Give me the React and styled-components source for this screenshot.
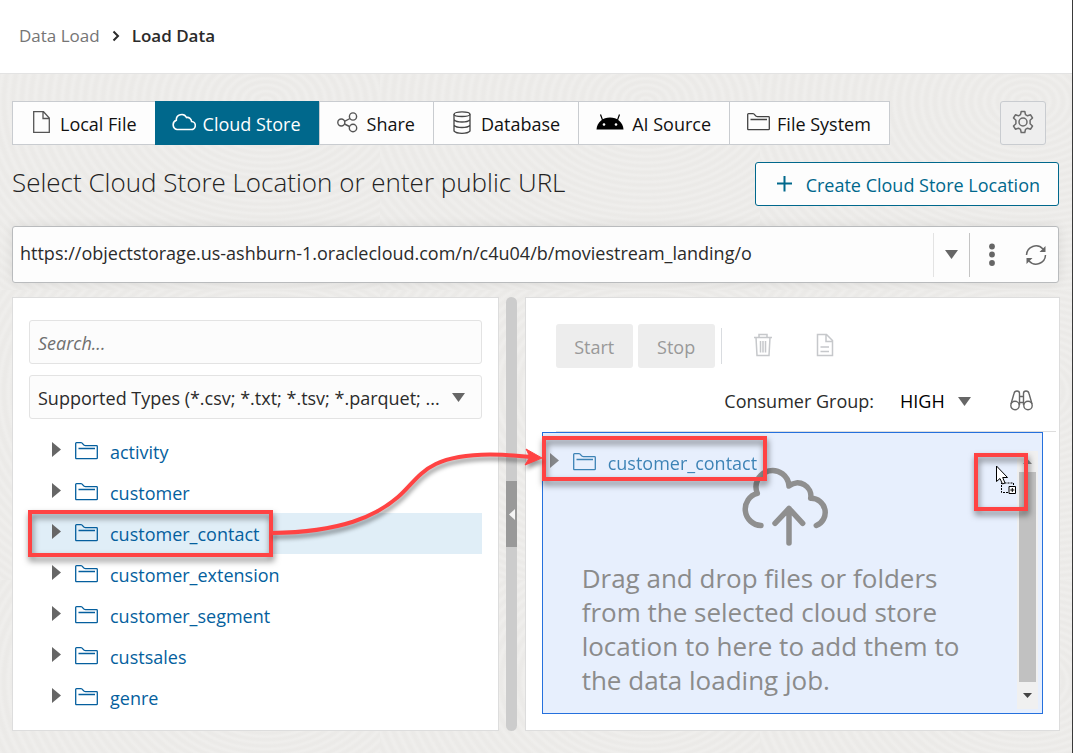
import React from "react";
import styled, { createGlobalStyle } from "styled-components";

const GlobalStyle = createGlobalStyle`
  *, *::before, *::after { box-sizing: border-box; }
  body {
    margin: 0;
    background: #efeeec;
    color: #2b2b2b;
    font-family: "Open Sans", "Noto Sans", sans-serif;
    font-size: 18px;
    line-height: 24px;
  }
  button, input, select { font: inherit; color: inherit; margin: 0; }
  h1, ul, p { margin: 0; padding: 0; }
`;

const Page = styled.div`
  min-height: 100vh;
  border-right: 1px solid #3a3a3a;
  background-color: #efeeec;
  background-image: repeating-radial-gradient(
    ellipse at 70% 35%,
    rgba(90, 80, 70, 0.025) 0 2px,
    transparent 5px 6px,
    rgba(90, 80, 70, 0.025) 9px
  );
  background-size: 380px 290px;
`;

const Header = styled.header`
  height: 74px;
  padding: 0 0 2px 19px;
  display: flex;
  align-items: center;
  background: #fff;
  border-bottom: 1px solid #e3e3e3;
`;

const Breadcrumb = styled.nav`
  display: flex;
  align-items: center;
  gap: 12px;
  font-size: 17px;
`;

const CrumbLink = styled.a`
  color: #757575;
  text-decoration: none;
`;

const CrumbCurrent = styled.span`
  font-weight: 600;
  color: #2b2b2b;
`;

const Main = styled.main`
  padding: 27px 12px 22px;
`;

const TopBar = styled.div`
  display: flex;
  justify-content: space-between;
  padding-right: 14px;
`;

const Tabs = styled.div`
  display: flex;
  border: 1px solid #c9ccd0;
`;

const Tab = styled.button`
  height: 42px;
  display: flex;
  align-items: center;
  gap: 7px;
  padding: 2px 18px 0 16px;
  border: 0;
  border-left: ${(p) => (p.$first ? "0" : "1px solid #c9ccd0")};
  background: #fdfdfd;
  color: #111;
  white-space: nowrap;
  ${(p) =>
    p.$active &&
    `
    background: #00688c;
    color: #fff;
    margin: -1px 0;
    height: 44px;
    border-color: #00688c;
  `}
`;

const TabIcon = styled.span`
  width: ${(p) => (p.$wide ? 30 : 24)}px;
  height: 28px;
  display: flex;
  justify-content: center;
  align-items: center;
  padding-bottom: 4px;
`;

const SettingsButton = styled.button`
  width: 46px;
  height: 44px;
  display: grid;
  place-items: center;
  padding: 0 0 2px;
  border: 1px solid #c9ccd0;
  border-radius: 3px;
  background: #eeeeee;
`;

const TitleBar = styled.div`
  display: flex;
  justify-content: space-between;
  align-items: flex-start;
  margin-top: 17px;
  padding-right: 1px;
`;

const Title = styled.h1`
  font-size: 26px;
  line-height: 40px;
  font-weight: 300;
  color: #222;
`;

const CreateButton = styled.button`
  height: 44px;
  display: flex;
  align-items: center;
  gap: 12px;
  padding: 1px 18px 0 20px;
  border: 1px solid #00688c;
  border-radius: 3px;
  background: #fdfdfd;
  color: #00688c;
`;

const UrlBar = styled.div`
  display: flex;
  align-items: center;
  height: 57px;
  margin: 20px 1px 0 0;
  border: 1px solid #b9bbbd;
  border-radius: 3px;
  background: #fdfdfd;
  box-shadow: 0 0 12px rgba(0, 0, 0, 0.08);
`;

const UrlInput = styled.input`
  flex: 1;
  min-width: 0;
  height: 100%;
  padding: 0 7px 4px;
  border: 0;
  outline: 0;
  background: transparent;
`;

const UrlAction = styled.button`
  width: ${(p) => p.$width}px;
  height: 44px;
  display: grid;
  place-items: center;
  padding: 0;
  border: 0;
  border-left: ${(p) => (p.$divider ? `1px solid ${p.$divider}` : "0")};
  background: transparent;
`;

const Workspace = styled.div`
  position: relative;
  display: grid;
  grid-template-columns: 10fr 26px 11fr;
  margin-top: 14px;
`;

const Panel = styled.section`
  min-width: 0;
  border: 1px solid #dddddd;
  background: #fff;
`;

const SourcePanel = styled(Panel)`
  padding: 22px 16px 11px;
`;

const field = `
  width: 100%;
  height: 44px;
  border: 1px solid #e3e3e3;
  border-radius: 3px;
  background: #fcfcfc;
`;

const SearchInput = styled.input`
  ${field}
  display: block;
  padding: 2px 8px 0;
  outline: 0;
  &::placeholder { color: #6f6f6f; font-style: italic; opacity: 1; }
`;

const SelectField = styled.div`
  ${field}
  display: flex;
  align-items: center;
  margin-top: 11px;
  padding-right: 16px;
`;

const PlainSelect = styled.select`
  flex: 1;
  min-width: 0;
  height: 42px;
  padding: 2px 8px 0;
  border: 0;
  outline: 0;
  appearance: none;
  background: transparent;
`;

const Tree = styled.ul`
  list-style: none;
  margin-top: 12px;
`;

const TreeItem = styled.li`
  position: relative;
  height: 41px;
  display: flex;
  background: ${(p) => (p.$selected ? "#e0eef7" : "transparent")};
`;

const TreeButton = styled.button`
  display: flex;
  align-items: center;
  padding: 0 8px 0 23px;
  border: 0;
  background: transparent;
  color: #055f9e;
  white-space: nowrap;
`;

const TreeIcon = styled.span`
  display: flex;
  height: 24px;
  padding-top: 2px;
  margin-left: ${(p) => (p.$gap ? 14 : 0)}px;
  margin-right: ${(p) => (p.$gap ? 12 : 0)}px;
`;

const Callout = styled.span`
  position: absolute;
  top: ${(p) => p.$top};
  left: ${(p) => p.$left};
  right: ${(p) => p.$right || "auto"};
  width: ${(p) => p.$width};
  height: ${(p) => p.$height};
  border: 4px solid #ff4343;
  filter: drop-shadow(1px 4px 3px rgba(0, 0, 0, 0.5));
  pointer-events: none;
`;

const Splitter = styled.div`
  justify-self: center;
  width: 11px;
  display: flex;
  flex-direction: column;
  justify-content: center;
  border-radius: 6px;
  background: #cccccc;
`;

const SplitterHandle = styled.button`
  width: 11px;
  height: 66px;
  display: grid;
  place-items: center;
  padding: 0;
  border: 0;
  background: #999999;
`;

const JobPanel = styled(Panel)`
  padding: 26px 16px 16px;
`;

const JobToolbar = styled.div`
  display: flex;
  align-items: center;
  gap: 5px;
  padding-left: 14px;
`;

const JobButton = styled.button`
  min-width: 77px;
  height: 44px;
  padding: 2px 0 0;
  border: 0;
  border-radius: 3px;
  background: #ededed;
  color: #999999;
`;

const ToolbarDivider = styled.span`
  width: 1px;
  height: 36px;
  margin: 0 15px 0 1px;
  background: #d9dce0;
`;

const IconButton = styled.button`
  width: ${(p) => p.$width || 42}px;
  height: 42px;
  display: grid;
  place-items: center;
  padding: 0 0 2px;
  border: 0;
  background: transparent;
`;

const GroupBar = styled.div`
  display: flex;
  align-items: center;
  justify-content: flex-end;
  height: 50px;
  margin-top: 8px;
  padding-right: 1px;
`;

const GroupSelect = styled.span`
  display: flex;
  align-items: center;
  width: 71px;
  margin: 0 29px 0 26px;
`;

const HighSelect = styled.select`
  flex: 1;
  min-width: 0;
  padding: 0;
  border: 0;
  outline: 0;
  appearance: none;
  background: transparent;
  color: #000;
`;

const GroupRule = styled.div`
  height: 1px;
  margin: 5px -13px 0 14px;
  background: #dddddd;
`;

const DropZone = styled.div`
  position: relative;
  min-height: 282px;
  border: 1px solid #2570dd;
  background: #e7effd;
`;

const DropMessage = styled.div`
  display: flex;
  flex-direction: column;
  padding: 32px 66px 16px 39px;
`;

const DropIcon = styled.span`
  align-self: center;
  display: flex;
  margin: 0 0 12px 14px;
`;

const DropText = styled.p`
  color: #8b8b8b;
  font-size: 26px;
  line-height: 34px;
`;

const DragGhost = styled.div`
  position: absolute;
  top: 9px;
  left: 0;
  height: 41px;
  display: flex;
  align-items: center;
  padding-left: 7px;
  color: #055f9e;
  opacity: 0.75;
`;

const Scrollbar = styled.div`
  position: absolute;
  top: 18px;
  right: 4px;
  bottom: 4px;
  width: 21px;
  display: flex;
  flex-direction: column;
  align-items: center;
  background: #f0f0f0;
`;

const ScrollArrow = styled.span`
  height: ${(p) => p.$size}px;
  display: grid;
  place-items: center;
`;

const ScrollThumb = styled.span`
  flex: 1;
  width: 17px;
  background: #c1c1c1;
`;

const DragCursor = styled.span`
  position: absolute;
  top: 31px;
  right: 25px;
  display: flex;
`;

const ArrowLayer = styled.svg`
  position: absolute;
  top: 0;
  left: 0;
  overflow: visible;
  pointer-events: none;
  filter: drop-shadow(1px 4px 2px rgba(0, 0, 0, 0.4));
`;

const Caret = ({ color = "#666" }) => (
  <svg width="13" height="9" viewBox="0 0 13 9" aria-hidden="true">
    <path d="M0 0h13L6.5 9z" fill={color} />
  </svg>
);

const Chevron = () => (
  <svg width="8" height="12" viewBox="0 0 8 12" fill="none" aria-hidden="true">
    <path d="M1.500 1.500 6 6l-4.500 4.500" stroke="#2b2b2b" strokeWidth="2" />
  </svg>
);

const Twisty = () => (
  <svg width="9" height="15" viewBox="0 0 9 15" aria-hidden="true">
    <path d="M0 0v15l9-7.500z" fill="#666" />
  </svg>
);

const Folder = ({ color = "currentColor" }) => (
  <svg width="23" height="18" viewBox="0 0 23 18" fill="none" stroke={color} strokeWidth="1.300" aria-hidden="true">
    <path d="M.7 16V1.500Q.7.700 1.500.700H6Q7 .7 8 2.200T10.500 3.700H21.500Q22.300 3.700 22.300 4.500V16Q22.300 16.700 21.500 16.700H1.500Q.7 16.700.7 16ZM3.500 6.500H20" />
  </svg>
);

const icons = {
  file: (
    <svg width="17" height="22" viewBox="0 0 17 22" fill="none" stroke="#555" strokeWidth="1.300">
      <path d="M.7.700H10.500L16.300 7V21.300H.7ZM10 .7V7.500H16" />
    </svg>
  ),
  cloud: (
    <svg width="24" height="20" viewBox="0 0 24 20" fill="none" stroke="#fff" strokeWidth="1.600">
      <path d="M5 17.500H19A4 4 0 0 0 19.600 9.500A4.300 4.300 0 0 0 14.500 5.500A5.400 5.400 0 0 0 4.300 8.300A4.800 4.800 0 0 0 5 17.500Z" />
    </svg>
  ),
  share: (
    <svg width="21" height="21" viewBox="0 0 21 21" fill="none" stroke="#555" strokeWidth="1.400">
      <circle cx="4.300" cy="10.500" r="3.500" />
      <circle cx="16" cy="4.500" r="3.600" />
      <circle cx="16" cy="16" r="3.700" />
      <path d="M7.500 9.300 13 6.500M7.500 12 12.500 14.500" />
    </svg>
  ),
  database: (
    <svg width="18" height="23" viewBox="0 0 18 23" fill="none" stroke="#444" strokeWidth="1.300">
      <ellipse cx="9" cy="3.200" rx="8" ry="2.300" />
      <path d="M1 3.200V20Q3 22.300 9 22.300T17 20V3.200M1 8.700Q3 11 9 11T17 8.700M1 14.200Q3 16.500 9 16.500T17 14.200" />
    </svg>
  ),
  ai: (
    <svg width="28" height="18" viewBox="0 0 28 18">
      <path d="M.5 16.500C1 9 7 4.500 14 4.500S27 9 27.500 16.500Z" fill="#000" />
      <path d="M6.500 7 4.500 1.500M21.500 7 23.500 1.500" stroke="#000" strokeWidth="1.200" />
      <circle cx="8" cy="11.500" r="1.300" fill="#fff" />
      <circle cx="20" cy="11.500" r="1.300" fill="#fff" />
    </svg>
  ),
  folder: <Folder color="#444" />,
};

const Gear = () => (
  <svg width="24" height="24" viewBox="0 0 24 24" fill="none" stroke="#6b6b6b" strokeWidth="1.500" strokeLinejoin="round">
    <circle cx="12" cy="12" r="4" />
    <path d="M10.200 1.500h3.600l.7 3.200 2 1.100 3.100-1 1.900 3.200-2.400 2.200v3.600l2.400 2.200-1.900 3.200-3.100-1-2 1.100-.7 3.200h-3.600l-.7-3.200-2-1.100-3.100 1L2.500 16l2.400-2.200v-3.600L2.500 8l1.900-3.200 3.100 1 2-1.100z" />
  </svg>
);

const Plus = () => (
  <svg width="18" height="20" viewBox="0 0 18 20" aria-hidden="true">
    <path d="M8.500 1V16.500M1 8.500H16" stroke="#00688c" strokeWidth="2" />
  </svg>
);

const Dots = () => (
  <svg width="6" height="24" viewBox="0 0 6 24" fill="#666">
    <circle cx="3" cy="3.500" r="2.900" />
    <circle cx="3" cy="11.500" r="2.900" />
    <circle cx="3" cy="20" r="2.900" />
  </svg>
);

const Refresh = () => (
  <svg width="22" height="22" viewBox="0 0 22 22" fill="none" stroke="#666" strokeWidth="1.500">
    <path d="M1.500 11A9.500 9.500 0 0 1 18 5M20.500 11A9.500 9.500 0 0 1 4 17" />
    <path d="M20.500 2V8H14.500ZM1.500 20V14H7.500Z" fill="#666" stroke="none" />
  </svg>
);

const Trash = () => (
  <svg width="20" height="24" viewBox="0 0 20 24" fill="none" stroke="#c6c8cb" strokeWidth="1.500">
    <path d="M1 4.500H19M6 4.500V1.500H14V4.500M3 4.500 4 22.500H16L17 4.500M7.500 8V19.500M10 8V19.500M12.500 8V19.500" />
  </svg>
);

const Log = () => (
  <svg width="18" height="24" viewBox="0 0 18 24" fill="none" stroke="#c6c8cb" strokeWidth="1.500">
    <path d="M1.500 1.500H10.500L16.500 7.500V22.500H1.500ZM10 1.500V8.500H16.500M4.500 14H13M4.500 18.500H13" />
  </svg>
);

const Binoculars = () => (
  <svg width="23" height="21" viewBox="0 0 23 21" fill="none" stroke="#666" strokeWidth="1.400">
    <circle cx="5" cy="15.500" r="4.200" />
    <circle cx="18" cy="15.500" r="4.200" />
    <path d="M1 14 4 3.500Q4.500 1 7 1T9.500 3.500V15M22 14 19 3.500Q18.500 1 16 1T13.500 3.500V15M9.500 6.500H13.500M9.500 12.500H13.500" />
  </svg>
);

const CloudUpload = () => (
  <svg width="92" height="84" viewBox="0 0 92 84" fill="none" stroke="#8f8f8f" strokeWidth="5.500" strokeLinecap="round" strokeLinejoin="round" aria-hidden="true">
    <path d="M21 60.500A16.400 16.400 0 0 1 17.300 28.300A16.500 16.500 0 1 1 49 21A13.300 13.300 0 0 1 70.700 33.300A14.100 14.100 0 0 1 76.300 60.500" />
    <path d="M49 78V43.500M35 58.300 49 43.500 62.700 58.300" />
  </svg>
);

const Pointer = () => (
  <svg width="22" height="32" viewBox="0 0 22 32" aria-hidden="true">
    <path d="M6.500 19H18.500V28.500H6.500Z" fill="none" stroke="#000" strokeDasharray="2 1" />
    <path d="M1.500 2V17.500L5 14.500 7.500 20 10 19 7.700 13.500H12.500Z" fill="#fff" stroke="#000" />
    <path d="M14 22.500H20.500V29.500H14Z" fill="#fff" stroke="#000" />
    <path d="M17.300 24V28M15.300 26H19.300" stroke="#000" />
  </svg>
);

const tabs = [
  { label: "Local File", icon: "file" },
  { label: "Cloud Store", icon: "cloud", active: true },
  { label: "Share", icon: "share" },
  { label: "Database", icon: "database" },
  { label: "AI Source", icon: "ai", wide: true },
  { label: "File System", icon: "folder" },
];

const folders = [
  "activity",
  "customer",
  "customer_contact",
  "customer_extension",
  "customer_segment",
  "custsales",
  "genre",
];

const FolderLabel = ({ name }) => (
  <>
    <TreeIcon><Twisty /></TreeIcon>
    <TreeIcon $gap><Folder /></TreeIcon>
    {name}
  </>
);

export default function App() {
  return (
    <Page>
      <GlobalStyle />
      <Header>
        <Breadcrumb aria-label="Breadcrumb">
          <CrumbLink href="#data-load">Data Load</CrumbLink>
          <Chevron />
          <CrumbCurrent aria-current="page">Load Data</CrumbCurrent>
        </Breadcrumb>
      </Header>
      <Main>
        <TopBar>
          <Tabs role="tablist">
            {tabs.map((tab, i) => (
              <Tab key={tab.label} type="button" role="tab" aria-selected={!!tab.active} $active={tab.active} $first={i === 0}>
                <TabIcon $wide={tab.wide}>{icons[tab.icon]}</TabIcon>
                {tab.label}
              </Tab>
            ))}
          </Tabs>
          <SettingsButton type="button" aria-label="Settings"><Gear /></SettingsButton>
        </TopBar>

        <TitleBar>
          <Title>Select Cloud Store Location or enter public URL</Title>
          <CreateButton type="button"><Plus />Create Cloud Store Location</CreateButton>
        </TitleBar>

        <UrlBar>
          <UrlInput
            type="text"
            aria-label="Cloud store location"
            defaultValue="https://objectstorage.us-ashburn-1.oraclecloud.com/n/c4u04/b/moviestream_landing/o"
          />
          <UrlAction type="button" aria-label="Show locations" $width={36} $divider="#e3e3e3"><Caret /></UrlAction>
          <UrlAction type="button" aria-label="More actions" $width={45} $divider="#c4c4c4"><Dots /></UrlAction>
          <UrlAction type="button" aria-label="Refresh" $width={44}><Refresh /></UrlAction>
        </UrlBar>

        <Workspace>
          <SourcePanel>
            <SearchInput type="search" aria-label="Search" placeholder="Search..." />
            <SelectField>
              <PlainSelect aria-label="File types">
                <option>Supported Types (*.csv; *.txt; *.tsv; *.parquet; ...</option>
              </PlainSelect>
              <Caret />
            </SelectField>
            <Tree>
              {folders.map((name) => {
                const selected = name === "customer_contact";
                return (
                  <TreeItem key={name} $selected={selected}>
                    <TreeButton type="button"><FolderLabel name={name} /></TreeButton>
                    {selected && <Callout $top="-3px" $left="-1px" $width="245px" $height="47px" />}
                  </TreeItem>
                );
              })}
            </Tree>
          </SourcePanel>

          <Splitter>
            <SplitterHandle type="button" aria-label="Collapse panel">
              <svg width="6" height="11" viewBox="0 0 6 11"><path d="M6 0v11L0 5.500z" fill="#f4f4f4" /></svg>
            </SplitterHandle>
          </Splitter>

          <JobPanel>
            <JobToolbar>
              <JobButton type="button" disabled>Start</JobButton>
              <JobButton type="button" disabled>Stop</JobButton>
              <ToolbarDivider />
              <IconButton type="button" aria-label="Delete" $width={42}><Trash /></IconButton>
              <IconButton type="button" aria-label="View log" $width={72}><Log /></IconButton>
            </JobToolbar>
            <GroupBar>
              <label htmlFor="consumer-group">Consumer Group:</label>
              <GroupSelect>
                <HighSelect id="consumer-group"><option>HIGH</option></HighSelect>
                <Caret />
              </GroupSelect>
              <IconButton type="button" aria-label="Find" $width={42}><Binoculars /></IconButton>
            </GroupBar>
            <GroupRule />
            <DropZone>
              <DropMessage>
                <DropIcon><CloudUpload /></DropIcon>
                <DropText>
                  Drag and drop files or folders from the selected cloud store location to here to add them to the data loading job.
                </DropText>
              </DropMessage>
              <DragGhost><FolderLabel name="customer_contact" /></DragGhost>
              <Scrollbar>
                <ScrollArrow $size={21}>
                  <svg width="9" height="5" viewBox="0 0 9 5"><path d="M0 5h9L4.500 0z" fill="#888" /></svg>
                </ScrollArrow>
                <ScrollThumb />
                <ScrollArrow $size={27}>
                  <svg width="9" height="5" viewBox="0 0 9 5"><path d="M0 0h9L4.500 5z" fill="#444" /></svg>
                </ScrollArrow>
              </Scrollbar>
              <DragCursor><Pointer /></DragCursor>
              <Callout $top="3px" $left="-1px" $width="225px" $height="45px" />
              <Callout $top="20px" $left="auto" $right="14px" $width="54px" $height="58px" />
            </DropZone>
          </JobPanel>

          <ArrowLayer width="540" height="260" viewBox="0 0 540 260" fill="none" aria-hidden="true">
            <path d="M260 236C330 235 364 219 386 200C408 181 412 158 478 157.500C498 157.500 508 159 522 160.500" stroke="#ff4343" strokeWidth="4" />
            <path d="M514 152 530 161 513 168 518 160Z" fill="#ff4343" stroke="#ff4343" />
          </ArrowLayer>
        </Workspace>
      </Main>
    </Page>
  );
}
